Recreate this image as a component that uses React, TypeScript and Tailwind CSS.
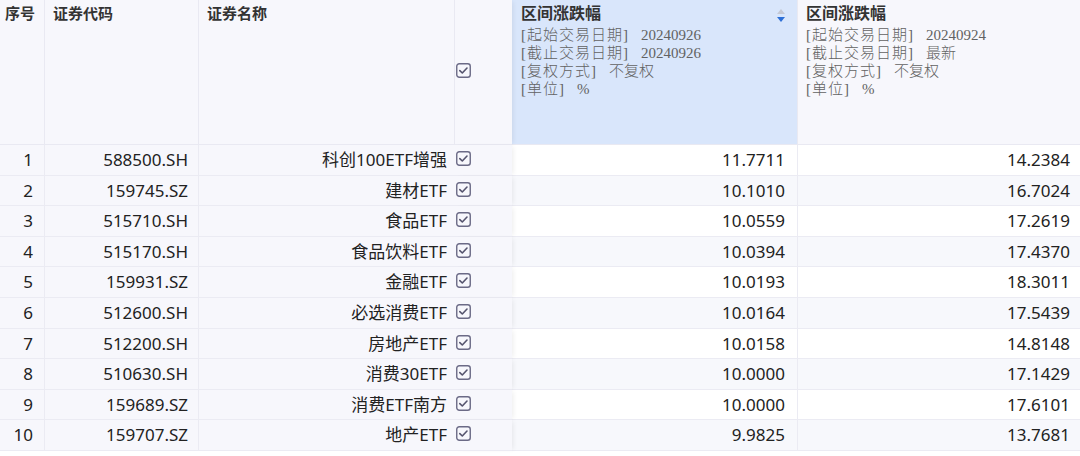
import { Fragment } from 'react';

const rows = [
  ['1', '588500.SH', '科创100ETF增强', '11.7711', '14.2384'],
  ['2', '159745.SZ', '建材ETF', '10.1010', '16.7024'],
  ['3', '515710.SH', '食品ETF', '10.0559', '17.2619'],
  ['4', '515170.SH', '食品饮料ETF', '10.0394', '17.4370'],
  ['5', '159931.SZ', '金融ETF', '10.0193', '18.3011'],
  ['6', '512600.SH', '必选消费ETF', '10.0164', '17.5439'],
  ['7', '512200.SH', '房地产ETF', '10.0158', '14.8148'],
  ['8', '510630.SH', '消费30ETF', '10.0000', '17.1429'],
  ['9', '159689.SZ', '消费ETF南方', '10.0000', '17.6101'],
  ['10', '159707.SZ', '地产ETF', '9.9825', '13.7681'],
];

const headFont = { fontFamily: '"Liberation Serif", "Noto Sans CJK SC", serif' };
const bodyFont = { fontFamily: '"Noto Sans", "Noto Sans CJK SC", sans-serif' };

function Check() {
  return (
    <svg width="15" height="15" viewBox="0 0 15 15" fill="none">
      <rect x="0.75" y="0.75" width="13.5" height="13.5" rx="2.5" stroke="#6b6a86" strokeWidth="1.4" />
      <path d="M3.8 7.6 L6.3 10 L11 5" stroke="#55546e" strokeWidth="1.6" strokeLinecap="round" strokeLinejoin="round" />
    </svg>
  );
}

function Detail({ items }: { items: [string, string][] }) {
  return (
    <div className="mt-[1px] text-[15px] leading-[18px] text-[#626262] font-light" style={headFont}>
      {items.map(([k, v]) => (
        <div key={k} className="whitespace-pre">
          <span className="tracking-[1px]">{k}</span>
          <span className="ml-[12px]">{v}</span>
        </div>
      ))}
    </div>
  );
}

export default function App() {
  return (
    <div className="w-[1080px] h-[456px] overflow-hidden bg-white">
      <div className="grid grid-cols-[45px_154px_256px_57px_285px_283px] grid-rows-[145px_repeat(10,30.6px)]">
        {/* header */}
        <div className="bg-[#f7f7fc] border-r border-b border-[#e9e9f2] pl-[5px] pt-[3px] text-[15px] font-bold text-[#333]" style={headFont}>序号</div>
        <div className="bg-[#f7f7fc] border-r border-b border-[#e9e9f2] pl-[8px] pt-[3px] text-[15px] font-bold text-[#333]" style={headFont}>证券代码</div>
        <div className="bg-[#f7f7fc] border-r border-b border-[#e9e9f2] pl-[8px] pt-[3px] text-[15px] font-bold text-[#333]" style={headFont}>证券名称</div>
        <div className="bg-[#f7f7fc] border-b border-[#e9e9f2] flex items-center pl-[1px] pb-[3px] shadow-[3px_0_5px_-2px_rgba(0,0,0,0.08)] relative z-10">
          <Check />
        </div>
        <div className="bg-[#d9e6fb] border-b border-[#e9e9f2] pl-[9px] pt-[3px] relative">
          <div className="text-[16px] font-bold text-[#333] leading-[22px]" style={headFont}>区间涨跌幅</div>
          <Detail items={[['[起始交易日期]', '20240926'], ['[截止交易日期]', '20240926'], ['[复权方式]', '不复权'], ['[单位]', '%']]} />
          <div className="absolute right-[12px] top-[9px] flex flex-col items-center gap-[3px]">
            <div className="w-0 h-0 border-l-[4px] border-r-[4px] border-b-[5px] border-l-transparent border-r-transparent border-b-[#c4c8d4]" />
            <div className="w-0 h-0 border-l-[4px] border-r-[4px] border-t-[5px] border-l-transparent border-r-transparent border-t-[#2d6fd6]" />
          </div>
        </div>
        <div className="bg-[#f7f7fc] border-l border-b border-[#e9e9f2] pl-[8px] pt-[3px]">
          <div className="text-[16px] font-bold text-[#333] leading-[22px]" style={headFont}>区间涨跌幅</div>
          <Detail items={[['[起始交易日期]', '20240924'], ['[截止交易日期]', '最新'], ['[复权方式]', '不复权'], ['[单位]', '%']]} />
        </div>

        {rows.map((r, i) => {
          const alt = i % 2 === 1 ? 'bg-[#f7f8fc]' : 'bg-white';
          return (
            <Fragment key={r[0]}>
              <div className="bg-[#f7f7fc] border-r border-b border-[#ebebf3] flex items-center justify-end pr-[11px] text-[17px] text-[#222]" style={bodyFont}>{r[0]}</div>
              <div className="bg-[#f7f7fc] border-r border-b border-[#ebebf3] flex items-center justify-end pr-[10px] text-[17px] text-[#222]" style={bodyFont}>{r[1]}</div>
              <div className="bg-[#f7f7fc] border-b border-[#ebebf3] flex items-center justify-end pr-[8px] text-[17px] text-[#222]" style={bodyFont}>{r[2]}</div>
              <div className="bg-[#f7f7fc] border-b border-[#ebebf3] pt-[6px] pl-[1px] shadow-[3px_0_5px_-2px_rgba(0,0,0,0.08)] relative z-10">
                <Check />
              </div>
              <div className={`${alt} border-b border-[#ebebf3] flex items-center justify-end pr-[12px] text-[17px] text-[#222]`} style={bodyFont}>{r[3]}</div>
              <div className={`${alt} border-l border-b border-[#ebebf3] flex items-center justify-end pr-[10px] text-[17px] text-[#222]`} style={bodyFont}>{r[4]}</div>
            </Fragment>
          );
        })}
      </div>
    </div>
  );
}
